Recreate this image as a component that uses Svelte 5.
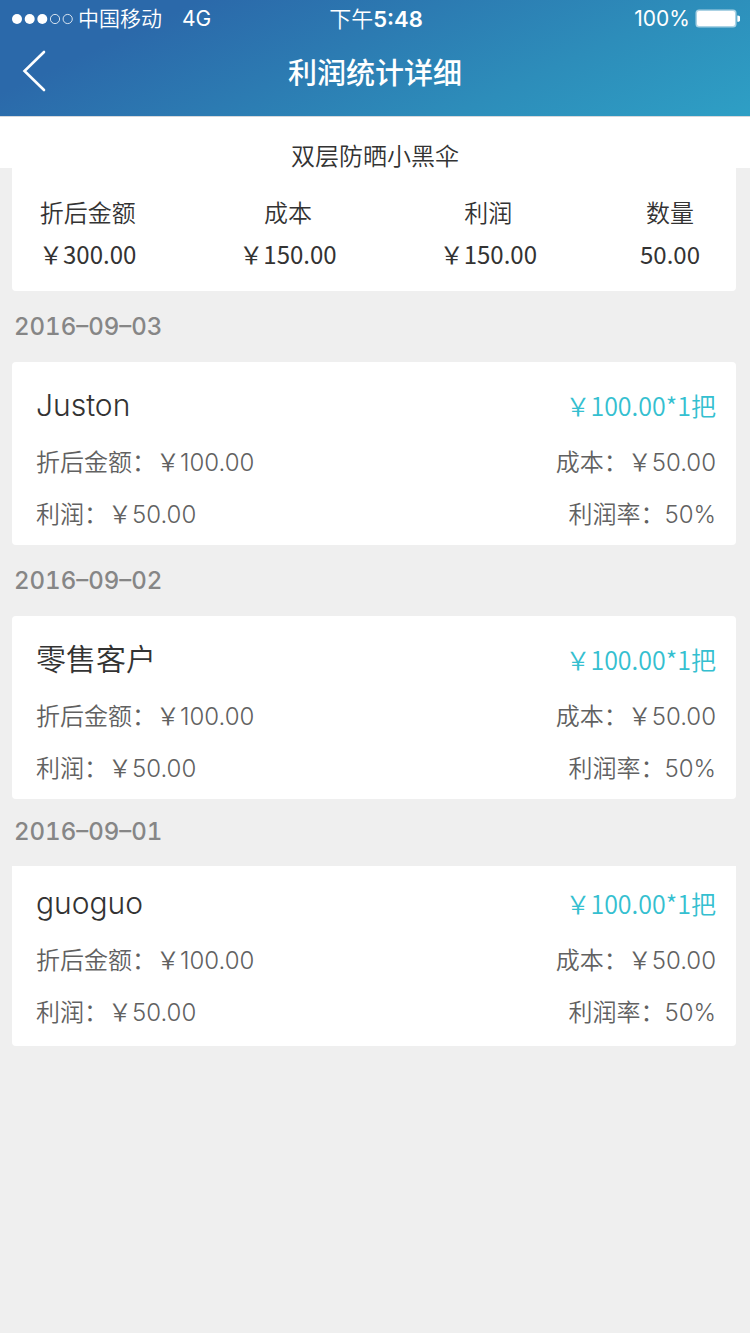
<script>
  const YEN = '\uFFE5';
  const COLON = '\uFF1A';

  const summary = [
    { label: '折后金额', value: `${YEN}300.00` },
    { label: '成本', value: `${YEN}150.00` },
    { label: '利润', value: `${YEN}150.00` },
    { label: '数量', value: '50.00' }
  ];

  const records = [
    { date: '2016–09–03', name: 'Juston' },
    { date: '2016–09–02', name: '零售客户' },
    { date: '2016–09–01', name: 'guoguo' }
  ].map((r) => ({
    ...r,
    price: `${YEN}100.00*1把`,
    amount: `${YEN}100.00`,
    cost: `${YEN}50.00`,
    profit: `${YEN}50.00`,
    rate: '50%'
  }));
</script>

<header class="top">
  <div class="status">
    <div class="carrier">
      <svg width="62" height="12" viewBox="0 0 62 12" aria-hidden="true">
        <circle cx="5" cy="6" r="5" fill="#fff" />
        <circle cx="17.7" cy="6" r="5" fill="#fff" />
        <circle cx="30.3" cy="6" r="5" fill="#fff" />
        <circle cx="43" cy="6" r="4.6" fill="none" stroke="#fff" stroke-width="0.8" />
        <circle cx="55.7" cy="6" r="4.6" fill="none" stroke="#fff" stroke-width="0.8" />
      </svg>
      <span class="operator">中国移动</span>
      <span>4G</span>
    </div>
    <div class="time">下午<b>5:48</b></div>
    <div class="battery">
      <span>100%</span>
      <svg width="45" height="20" viewBox="0 0 45 20" aria-hidden="true">
        <rect x="0.5" y="0.5" width="41" height="18" rx="3.5" fill="#fff" fill-opacity="0.6" />
        <rect x="2" y="2" width="38" height="15" rx="2" fill="#fff" />
        <path d="M42.3 6.4a3.2 3.2 0 0 1 0 6.4z" fill="#fff" />
      </svg>
    </div>
  </div>
  <nav class="bar">
    <button class="back" type="button" aria-label="返回">
      <svg width="26" height="42" viewBox="0 0 26 42" aria-hidden="true">
        <path d="M23 2 3.5 21 23 40" fill="none" stroke="#fff" stroke-width="2.6" stroke-linecap="round" stroke-linejoin="miter" />
      </svg>
    </button>
    <h1>利润统计详细</h1>
  </nav>
</header>

<main>
  <h2 class="product">双层防晒小黑伞</h2>
  <dl class="summary">
    {#each summary as item}
      <div>
        <dt>{item.label}</dt>
        <dd>{item.value}</dd>
      </div>
    {/each}
  </dl>

  {#each records as r}
    <section class="record">
      <h3 class="date">{r.date}</h3>
      <article class="card">
        <div class="row head">
          <span class="name">{r.name}</span>
          <span class="price">{r.price}</span>
        </div>
        <div class="row">
          <span>折后金额{COLON}{r.amount}</span>
          <span>成本{COLON}{r.cost}</span>
        </div>
        <div class="row">
          <span>利润{COLON}{r.profit}</span>
          <span>利润率{COLON}{r.rate}</span>
        </div>
      </article>
    </section>
  {/each}
</main>

<style>
  :global(body) {
    background: #efefef;
    color: #333;
    font-family: Inter, 'Noto Sans CJK SC', sans-serif;
    font-size: 24px;
  }

  h1, h2, h3, dl, dd {
    margin: 0;
    font-weight: 400;
  }

  .top {
    background: linear-gradient(155deg, #2b69aa 20%, #2d8dba 70%, #2e9fc5);
    border-bottom: 1px solid #d5d8dc;
    color: #fff;
  }

  .status {
    display: grid;
    grid-template-columns: 1fr auto 1fr;
    align-items: center;
    height: 38px;
    padding: 0 10px 0 12px;
    font-size: 21px;
    line-height: 38px;
  }

  .carrier, .battery {
    display: flex;
    align-items: center;
  }

  .operator {
    margin: 0 20px 0 4px;
    font-weight: 350;
  }

  .time {
    font-size: 22px;
    font-weight: 350;
  }

  .time b {
    font-weight: 600;
  }

  .battery {
    justify-content: flex-end;
    gap: 5px;
  }

  .bar {
    display: grid;
    grid-template-columns: 1fr auto 1fr;
    align-items: center;
    height: 78px;
  }

  .back {
    justify-self: start;
    display: flex;
    padding: 0 21px 12px;
    border: 0;
    background: none;
    cursor: pointer;
  }

  h1 {
    padding-bottom: 6px;
    font-size: 29px;
    line-height: 40px;
    font-weight: 500;
  }

  .product {
    height: 51px;
    padding-top: 22px;
    box-sizing: border-box;
    background: #fff;
    font-size: 24px;
    line-height: 36px;
    font-weight: 350;
    text-align: center;
  }

  .summary {
    display: flex;
    justify-content: space-between;
    margin: 0 14px 0 12px;
    padding: 23px 36px 16px 27px;
    border-radius: 0 0 4px 4px;
    background: #fff;
    font-family: 'Noto Sans CJK SC', sans-serif;
    font-weight: 350;
    line-height: 42px;
    text-align: center;
  }

  .date {
    padding: 16px 14px 15px;
    color: #868686;
    font-size: 24px;
    line-height: 40px;
    font-weight: 450;
    font-variant-numeric: tabular-nums;
  }

  .card {
    margin: 0 14px 0 12px;
    padding: 12px 20px 4px 24px;
    border-radius: 4px;
    background: #fff;
  }

  .row {
    display: flex;
    justify-content: space-between;
    color: #616161;
    font-weight: 350;
    line-height: 52px;
  }

  .head {
    line-height: 63px;
  }

  .name {
    color: #333;
    font-size: 30px;
  }

  .price {
    color: #35bfd0;
    font-family: 'Noto Sans CJK SC', sans-serif;
    font-size: 25px;
  }

  .record:last-child .date {
    padding: 13px 14px 14px;
  }

  .record:last-child .card {
    padding: 6px 20px 7px 24px;
    border-radius: 0 0 4px 4px;
  }
</style>
